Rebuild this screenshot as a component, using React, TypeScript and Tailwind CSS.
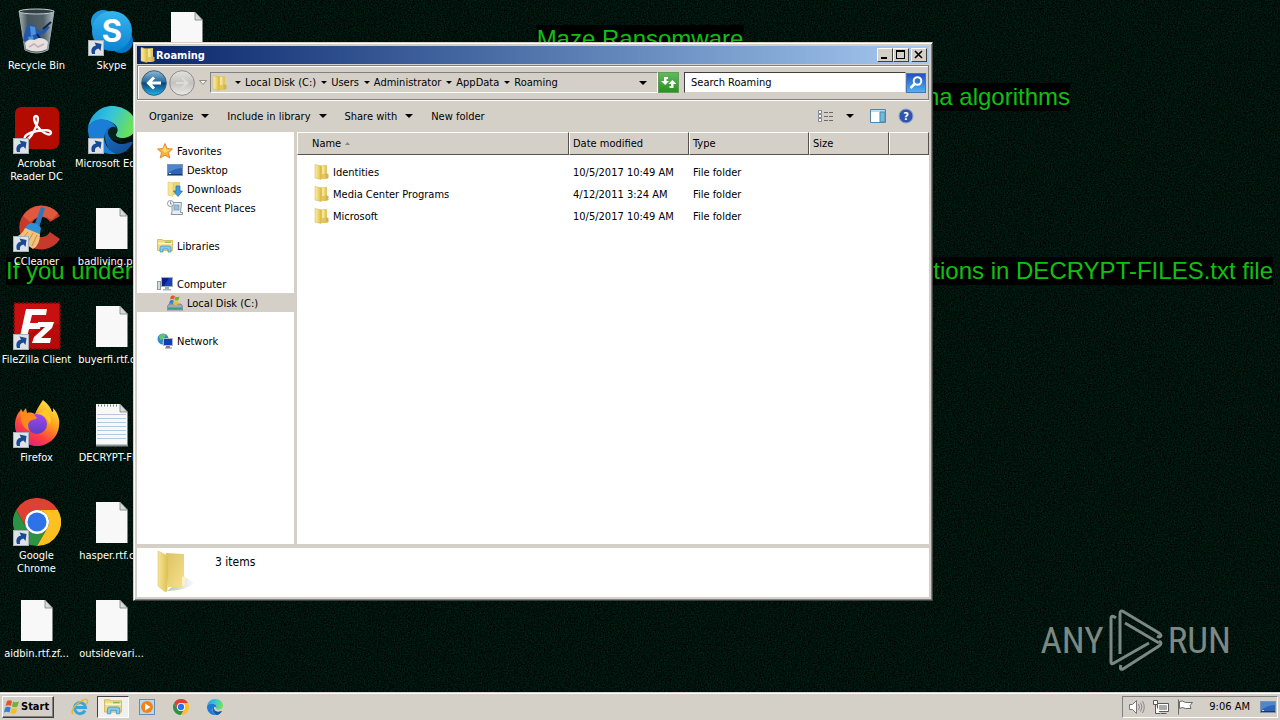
import React, { useState } from 'react';

type IconProps = { className?: string };

const ShortcutArrow: React.FC = () => (
  <svg viewBox="0 0 16 16" className="absolute bottom-0 left-0 size-4" aria-hidden="true">
    <rect x="0.5" y="0.5" width="15" height="15" fill="#dfe3e8" stroke="#aab0b8" />
    <path d="M4 14C2.500 9.500 4 6.500 8 5.500L6.500 2.500L13.500 4L12.500 11L10.500 8.500C7.500 9 6.500 11 7 14Z" fill="#1b4a94" />
  </svg>
);

const RecycleBinIcon: React.FC = () => (
  <svg viewBox="0 0 48 48" className="size-12" aria-hidden="true">
    <defs>
      <linearGradient id="bin" x1="0" x2="1">
        <stop offset="0" stopColor="#a9b6bb" />
        <stop offset="0.25" stopColor="#46555b" />
        <stop offset="0.7" stopColor="#536168" />
        <stop offset="1" stopColor="#b4bfc3" />
      </linearGradient>
    </defs>
    <path d="M6 3L12 42Q24 48 35 42L41 3Z" fill="url(#bin)" stroke="#9aa8ad" />
    <path d="M13 20q3-5 7-3l3 4 5 2 6-5 3 1-5 6-4 2 1 5-6 1-3-3-5 4-5-1 1-6z" fill="#2258a8" />
    <path d="M17 18l5 1 1 7-5 2zM15 29l5-1 1 5-5 1z" fill="#4c92e0" />
    <path d="M30 21l8-7M24 26l4 6" fill="none" stroke="#1c2446" strokeWidth="2" />
    <path d="M12 35q3-5 9-3l5-2q6 0 9 4l-1 7q-10 5-21 0z" fill="#e6dfe0" />
    <path d="M16 39l5-3 4 3 6-3" fill="none" stroke="#c5adb4" strokeWidth="1.500" />
    <ellipse cx="23.500" cy="3.500" rx="17.500" ry="2.500" fill="#323f42" stroke="#c5cfd2" />
  </svg>
);

const SkypeIcon: React.FC = () => (
  <svg viewBox="0 0 48 48" className="size-12" aria-hidden="true">
    <defs>
      <linearGradient id="skype" x2="0" y2="1">
        <stop offset="0" stopColor="#35b5ee" />
        <stop offset="1" stopColor="#0a84d4" />
      </linearGradient>
    </defs>
    <circle cx="15" cy="14" r="12" fill="#1e97dc" />
    <circle cx="33" cy="33" r="12" fill="#0b75c6" />
    <circle cx="24" cy="23" r="20" fill="url(#skype)" />
    <text x="24" y="34" textAnchor="middle" fontSize="31" fontWeight="700" fill="#fff" className="font-['Inter',sans-serif]">S</text>
  </svg>
);

const AcrobatIcon: React.FC = () => (
  <svg viewBox="0 0 48 48" className="size-12" aria-hidden="true">
    <rect x="2" y="1" width="44" height="42" rx="6" fill="#b30b00" />
    <path
      d="M12 33c-2-3 5-7 12-8 8-1.500 14-1 14 2-1 4-10-1-14-7-3-4-4-10-1-10 4 0 1 10-2 15-3 6-7 10-9 8Z"
      fill="none"
      stroke="#fff"
      strokeWidth="2.400"
    />
  </svg>
);

const EdgeIcon: React.FC<IconProps & { hollow?: boolean }> = ({ className, hollow }) => (
  <svg viewBox="0 0 48 48" className={className} aria-hidden="true">
    <defs>
      <linearGradient id="edge-top" x1="0" x2="1" y2="0.300">
        <stop offset="0" stopColor="#1b9bdd" />
        <stop offset="0.5" stopColor="#33c4dc" />
        <stop offset="1" stopColor="#6be05c" />
      </linearGradient>
      <linearGradient id="edge-low" x2="1" y2="1">
        <stop offset="0" stopColor="#1b6fc9" />
        <stop offset="1" stopColor="#114a8b" />
      </linearGradient>
    </defs>
    <path d="M0 22C2 9 12 0 24 0c13 0 24 9 24 19 0 8-6 13-13 13-5 0-9-2-7-4 3-3 2-9-5-12C15 12 4 13 0 22Z" fill="url(#edge-top)" />
    <path d="M0 22C3 13 15 11 23 16c5 3 7 8 5 11-1-4-9-5-11 1-3 9 4 17 12 20C12 50-1 39 0 22Z" fill="#1a7ed6" />
    <path d="M17 28c0-3 2-6 5-7-4 9 3 17 12 17 6 0 9-3 11-2-3 7-9 12-16 12-8-2-13-11-12-20Z" fill="url(#edge-low)" />
    {hollow && <path d="M20 25c1-4 7-6 9-2 1 3-1 4-1 6s4 4 8 4c-9 4-17-1-16-8Z" fill="#06241f" />}
  </svg>
);

const CCleanerIcon: React.FC = () => (
  <svg viewBox="0 0 48 48" className="size-12" aria-hidden="true">
    <path d="M47 12A22 22 0 1 0 47 35L37 28A10 10 0 1 1 37 18Z" fill="#c53a2a" />
    <path d="M45 9A22 22 0 0 0 10 12L17 18Q28 8 39 16Z" fill="#e0593f" />
    <path d="M28 3l4 1-6 20-5-2z" fill="#2c78bd" />
    <path d="M14 21q8-5 14 3l-1 6-15-5z" fill="#2f8fd8" />
    <path d="M12 24l15 6q0 11-7 15L2 33q7-2 10-9Z" fill="#f1c27c" />
    <path d="M15 28L8 36M20 29L14 40M24 31L19 42" stroke="#c98d42" />
  </svg>
);

const FileZillaIcon: React.FC = () => (
  <svg viewBox="0 0 48 48" className="size-12" aria-hidden="true">
    <rect x="1" y="1" width="46" height="46" fill="#b80a0a" stroke="#7c0505" strokeWidth="2" strokeDasharray="2 2" />
    <path d="M2 2H46V22Q22 24 2 42Z" fill="#c91010" />
    <path d="M13 7H34L33 13H19L17 21H28L27 27H16L13 39H6Z" fill="#fff" />
    <path d="M25 20H41L39 26L28 36H38L37 41H19L21 35L32 25H24Z" fill="#fff" />
  </svg>
);

const FirefoxIcon: React.FC = () => (
  <svg viewBox="0 0 48 48" className="size-12" aria-hidden="true">
    <defs>
      <linearGradient id="fox" x1="0.800" y1="0" x2="0.200" y2="1">
        <stop offset="0" stopColor="#fff044" />
        <stop offset="0.4" stopColor="#ff9a1c" />
        <stop offset="0.7" stopColor="#ff3b45" />
        <stop offset="1" stopColor="#d71c87" />
      </linearGradient>
      <linearGradient id="fox-globe" x2="0" y2="1">
        <stop offset="0" stopColor="#a247f0" />
        <stop offset="1" stopColor="#5a3fc0" />
      </linearGradient>
    </defs>
    <path d="M30 0C35 4 38 8 39 12C41 12 40 9 40 8C45 13 47 20 46 26C45 38 35 46 24 46C11 46 2 37 2 25C2 19 4 14 7 11L8 9L10 12L13 8L14 13C17 12 20 13 22 14C24 9 27 4 30 0Z" fill="url(#fox)" />
    <circle cx="24" cy="24" r="10" fill="url(#fox-globe)" />
    <path d="M8 12L14 13C19 13 22 15 24 18C23 20 19 19 17 21C14 24 15 28 17 31C10 29 7 22 8 12Z" fill="#ff8a1b" />
    <path d="M25 14C31 14 36 19 36 25C40 20 37 13 32 10C30 12 27 12 25 14Z" fill="#ffc928" />
  </svg>
);

const ChromeIcon: React.FC<IconProps> = ({ className }) => (
  <svg viewBox="0 0 48 48" className={className} aria-hidden="true">
    <path d="M24 12H44.800A24 24 0 0 0 3.200 12L13.600 30A12 12 0 0 1 24 12Z" fill="#de4032" />
    <path d="M13.600 30L3.200 12A24 24 0 0 0 24 48L34.400 30A12 12 0 0 1 13.600 30Z" fill="#2c9345" />
    <path d="M34.400 30L24 48A24 24 0 0 0 44.800 12H24A12 12 0 0 1 34.400 30Z" fill="#fcc120" />
    <circle cx="24" cy="24" r="12" fill="#fff" />
    <circle cx="24" cy="24" r="9.500" fill="#2d72e8" />
  </svg>
);

const BlankFileIcon: React.FC<{ lined?: boolean }> = ({ lined }) => (
  <svg viewBox="0 0 48 48" className="size-12" aria-hidden="true">
    <path d="M8 4H32L39.500 12V45H8Z" fill="#f8f8f8" />
    <path d="M32 4V12H39.500Z" fill="#d7dbdb" stroke="#78807e" strokeWidth="0.800" />
    {lined && (
      <>
        <path d="M9 14.500H38M9 18.500H38M9 22.500H38M9 26.500H38M9 30.500H38M9 34.500H38M9 38.500H38" stroke="#b6c8dd" />
        <path d="M10 5.500H31" stroke="#777" strokeWidth="2" strokeDasharray="1 2" />
        <path d="M8 45.500H40" stroke="#8b8f92" strokeWidth="2" />
      </>
    )}
  </svg>
);

const FolderIcon: React.FC<IconProps> = ({ className }) => (
  <svg viewBox="0 0 16 16" className={className} aria-hidden="true">
    <defs>
      <linearGradient id="folder-front" x2="1">
        <stop offset="0" stopColor="#fbf1a8" />
        <stop offset="1" stopColor="#dfbe48" />
      </linearGradient>
    </defs>
    <path d="M7 1.500L14 1V12L15.500 14L12 15H7Z" fill="#e3c75e" />
    <path d="M9 2H11.500V10H9Z" fill="#f4e595" />
    <path d="M12.500 9L15.500 10V14L12.500 15Z" fill="#d3b452" />
    <path d="M2 0.500L8 2V15.500L2 14Z" fill="url(#folder-front)" stroke="#cdae48" strokeWidth="0.500" />
  </svg>
);

const LargeFolderIcon: React.FC = () => (
  <svg viewBox="0 0 40 44" className="h-11 w-10" aria-hidden="true">
    <defs>
      <linearGradient id="big-front" x2="1">
        <stop offset="0" stopColor="#f5e59a" />
        <stop offset="1" stopColor="#dfc04e" />
      </linearGradient>
      <linearGradient id="big-back" x2="1" y2="1">
        <stop offset="0" stopColor="#ddc263" />
        <stop offset="1" stopColor="#f5e08c" />
      </linearGradient>
      <linearGradient id="big-shadow" x2="1">
        <stop offset="0" stopColor="#9aa0b0" />
        <stop offset="1" stopColor="#fff" />
      </linearGradient>
    </defs>
    <path d="M10 41L28 27L38 33Q30 40 10 41Z" fill="url(#big-shadow)" opacity="0.700" />
    <path d="M9 3L27 4V37L11 37Z" fill="url(#big-back)" />
    <path d="M25 27L28 26V35L25 37Z" fill="#fbf3c8" />
    <path d="M1 1L11 6V27L10 41Q9 42 7 41L1 36Z" fill="url(#big-front)" stroke="#e0c869" strokeWidth="0.600" />
  </svg>
);

const StarIcon: React.FC = () => (
  <svg viewBox="0 0 16 16" className="size-4" aria-hidden="true">
    <path d="M8 0.500L10.200 5.500L15.500 6L11.500 9.700L12.800 15L8 12.200L3.200 15L4.500 9.700L0.500 6L5.800 5.500Z" fill="#f9b23a" stroke="#dd7a24" strokeWidth="0.800" />
    <path d="M8 3L9.500 6.500L13 7L8 10L5 7Z" fill="#ffd968" />
  </svg>
);

const MonitorIcon: React.FC = () => (
  <svg viewBox="0 0 16 16" className="size-4" aria-hidden="true">
    <rect x="0.500" y="2.500" width="15" height="11" fill="#2f64b4" stroke="#7e93ad" />
    <path d="M1 3H15V6Q8 6 1 11Z" fill="#4f86d0" />
    <path d="M1 12.500H15" stroke="#173764" />
    <path d="M2 11.500H4" stroke="#c8e6ff" />
  </svg>
);

const DownloadsIcon: React.FC = () => (
  <svg viewBox="0 0 16 16" className="size-4" aria-hidden="true">
    <path d="M6 1H13V14H6Z" fill="#ecd577" />
    <path d="M1 1L6 2V15.500L1 14Z" fill="#f6e694" stroke="#d9bd5a" strokeWidth="0.500" />
    <path d="M9 5H13V10H15.500L11 15.500L6.500 10H9Z" fill="#3d9be0" stroke="#1f6cb0" strokeWidth="0.700" />
  </svg>
);

const RecentIcon: React.FC = () => (
  <svg viewBox="0 0 16 16" className="size-4" aria-hidden="true">
    <path d="M5 2.500H14.500L13.500 12.500H15.500V14.500H4L5 12Z" fill="#e7edf1" stroke="#8a979f" />
    <rect x="7" y="5" width="5" height="5" fill="#9cc0da" stroke="#6f94ae" strokeWidth="0.700" />
    <circle cx="3.500" cy="3.500" r="3" fill="#fff" stroke="#88959e" />
    <path d="M3.500 1.500V4H5" fill="none" stroke="#53646f" strokeWidth="0.700" />
  </svg>
);

const LibrariesIcon: React.FC<IconProps> = ({ className }) => (
  <svg viewBox="0 0 16 16" className={className} aria-hidden="true">
    <path d="M0.500 1.500H5L6.500 2.500H15.500V12.500H0.500Z" fill="#f0dc84" stroke="#cda944" strokeWidth="0.700" />
    <path d="M1 5.500H15" stroke="#fff6c8" strokeWidth="1.500" />
    <path d="M8 4.200H14" stroke="#6ab04c" />
    <path d="M3 14V10Q3 8 5 8H12Q14 8 14 10V14H11V11H6V14Z" fill="#85c8ea" stroke="#3e8fc0" strokeWidth="0.700" />
  </svg>
);

const ComputerIcon: React.FC = () => (
  <svg viewBox="0 0 16 16" className="size-4" aria-hidden="true">
    <rect x="0.500" y="5.500" width="3" height="8" fill="#d5dbe2" stroke="#8b97a3" />
    <rect x="4.500" y="1.500" width="11" height="9" fill="#173fc4" stroke="#a7afb9" />
    <path d="M5 2H12L7 10H5Z" fill="#0b1f86" />
    <path d="M8 11H12V13H14V14.500H6V13H8Z" fill="#a8b1bb" />
  </svg>
);

const WindowsFlag: React.FC<IconProps> = ({ className }) => (
  <svg viewBox="0 0 16 16" className={className} aria-hidden="true">
    <path d="M3 2Q5.500 0.500 8 2L7 7Q4.500 5.500 1.500 7Z" fill="#e8542a" />
    <path d="M9 2.500Q11.500 4 15 2.500L13.500 7.500Q11 9 8 7.500Z" fill="#6cb52d" />
    <path d="M1.200 8.500Q4 7 6.700 8.500L5.500 13.500Q3 12 0 13.500Z" fill="#2f7fd6" />
    <path d="M7.800 9Q10.500 10.500 13.200 9L12 14Q9 15.500 6.500 14Z" fill="#f5bd1f" />
  </svg>
);

const DiskIcon: React.FC = () => (
  <svg viewBox="0 0 16 16" className="size-4" aria-hidden="true">
    <path d="M2 9H14L16 12V15H0V12Z" fill="#9bacb5" stroke="#5b6d77" strokeWidth="0.600" />
    <path d="M1 12.500H15V14.500H1Z" fill="#3d9a86" />
    <path d="M4 1Q6 0 8 1L7 4.500Q5 3.500 3 4.500Z" fill="#e8542a" />
    <path d="M8.500 1.500Q10 2.500 12.500 1.500L11.500 5Q9.500 6 7.500 5Z" fill="#6cb52d" />
    <path d="M3 5.500Q5 4.500 6.800 5.500L6 9Q4 8 2 9Z" fill="#2f7fd6" />
    <path d="M7.500 6Q9.500 7 11.500 6L10.500 9.500Q8.500 10.500 6.500 9.500Z" fill="#f5bd1f" />
  </svg>
);

const NetworkIcon: React.FC = () => (
  <svg viewBox="0 0 16 16" className="size-4" aria-hidden="true">
    <circle cx="6" cy="6" r="5.500" fill="#2c8bd2" />
    <path d="M2 3Q6-1 9 2L6 6L3 7ZM5 9L8 8V11L6 11Z" fill="#69c36b" />
    <rect x="6.500" y="5.500" width="9" height="7" fill="#1739b8" stroke="#b2bac4" />
    <path d="M9 13H13V14.500H15V15.500H8V14.500H9Z" fill="#7a8591" />
  </svg>
);

const Caret: React.FC<IconProps> = ({ className = 'h-1 w-2' }) => (
  <svg viewBox="0 0 8 4" className={className} aria-hidden="true">
    <path d="M0 0H8L4 4Z" fill="#000" />
  </svg>
);

const NavCircle: React.FC<{ label: string; forward?: boolean }> = ({ label, forward }) => (
  <button type="button" aria-label={label} className="size-7 shrink-0">
    <svg viewBox="0 0 28 28" className="size-7" aria-hidden="true">
      <defs>
        <linearGradient id="nav-back" x2="0" y2="1">
          <stop offset="0" stopColor="#8fb9d3" />
          <stop offset="0.45" stopColor="#2a6a9c" />
          <stop offset="0.5" stopColor="#0b4379" />
          <stop offset="1" stopColor="#21b5ea" />
        </linearGradient>
        <linearGradient id="nav-forward" x2="0" y2="1">
          <stop offset="0" stopColor="#e3e3e1" />
          <stop offset="0.5" stopColor="#c3c2be" />
          <stop offset="1" stopColor="#ecebe8" />
        </linearGradient>
      </defs>
      <circle cx="14" cy="14" r="12.300" fill={forward ? 'url(#nav-forward)' : 'url(#nav-back)'} stroke={forward ? '#8d8d8b' : '#3b5f79'} />
      <path
        d={forward ? 'M8 14H19M14 9L19.500 14L14 19' : 'M21 14H9M14 8.500L8.500 14L14 19.500'}
        fill="none"
        stroke={forward ? '#dddcd9' : '#fff'}
        strokeWidth={forward ? 2 : 3}
      />
    </svg>
  </button>
);

type DesktopItem = { label: string; icon: React.ReactNode; shortcut?: boolean; wrap?: boolean };

const desktopItems: DesktopItem[] = [
  { label: 'Recycle Bin', icon: <RecycleBinIcon /> },
  { label: 'Acrobat Reader DC', icon: <AcrobatIcon />, shortcut: true, wrap: true },
  { label: 'CCleaner', icon: <CCleanerIcon />, shortcut: true },
  { label: 'FileZilla Client', icon: <FileZillaIcon />, shortcut: true },
  { label: 'Firefox', icon: <FirefoxIcon />, shortcut: true },
  { label: 'Google Chrome', icon: <ChromeIcon className="size-12" />, shortcut: true, wrap: true },
  { label: 'aidbin.rtf.zf...', icon: <BlankFileIcon /> },
  { label: 'Skype', icon: <SkypeIcon />, shortcut: true },
  { label: 'Microsoft Edge', icon: <EdgeIcon className="size-12" hollow />, shortcut: true },
  { label: 'badliving.png', icon: <BlankFileIcon /> },
  { label: 'buyerfi.rtf.c...', icon: <BlankFileIcon /> },
  { label: 'DECRYPT-FI...', icon: <BlankFileIcon lined /> },
  { label: 'hasper.rtf.c...', icon: <BlankFileIcon /> },
  { label: 'outsidevari...', icon: <BlankFileIcon /> },
  { label: '', icon: <BlankFileIcon /> },
];

type NavItem = { label: string; icon: React.ReactNode; child?: boolean };

const navGroups: NavItem[][] = [
  [
    { label: 'Favorites', icon: <StarIcon /> },
    { label: 'Desktop', icon: <MonitorIcon />, child: true },
    { label: 'Downloads', icon: <DownloadsIcon />, child: true },
    { label: 'Recent Places', icon: <RecentIcon />, child: true },
  ],
  [{ label: 'Libraries', icon: <LibrariesIcon className="size-4" /> }],
  [
    { label: 'Computer', icon: <ComputerIcon /> },
    { label: 'Local Disk (C:)', icon: <DiskIcon />, child: true },
  ],
  [{ label: 'Network', icon: <NetworkIcon /> }],
];

const crumbs = ['Local Disk (C:)', 'Users', 'Administrator', 'AppData', 'Roaming'];

const files = [
  { name: 'Identities', modified: '10/5/2017 10:49 AM' },
  { name: 'Media Center Programs', modified: '4/12/2011 3:24 AM' },
  { name: 'Microsoft', modified: '10/5/2017 10:49 AM' },
];

const raised = 'border border-t-white border-l-white border-r-[#404040] border-b-[#404040] bg-[#d4d0c8]';
const headCell = 'border-t border-l border-t-white border-l-white border-r border-b border-r-[#55524e] border-b-[#55524e] p-0 text-left font-normal';

const Wallpaper: React.FC = () => (
  <div className="absolute inset-0 overflow-hidden text-2xl leading-7 text-[#10c010] font-['Liberation_Sans',Arial,sans-serif]">
    <svg className="absolute inset-0 size-full" aria-hidden="true">
      <filter id="grain" colorInterpolationFilters="sRGB">
        <feTurbulence type="fractalNoise" baseFrequency="0.700" numOctaves="2" seed="4" />
        <feColorMatrix values="0 0 0 0 0.002  0.240 0 0 0 -0.047  0.150 0 0 0 -0.028  0 0 0 0 1" />
      </filter>
      <rect width="100%" height="100%" filter="url(#grain)" />
    </svg>
    <p className="absolute top-[25px] left-1/2 -translate-x-1/2 bg-black whitespace-nowrap">Maze Ransomware</p>
    <p className="absolute top-[83px] right-[210px] bg-black whitespace-nowrap">na algorithms</p>
    <p className="absolute top-[257px] left-[6px] bg-black whitespace-nowrap">If you unders</p>
    <p className="absolute top-[257px] right-[7px] bg-black whitespace-nowrap">ctions in DECRYPT-FILES.txt file</p>
  </div>
);

const Watermark: React.FC = () => (
  <div className="absolute right-[49px] bottom-5 flex items-center gap-1 text-[37px] leading-none text-[#7b8883] font-['Roboto_Condensed',Roboto,sans-serif]">
    <span>ANY</span>
    <svg viewBox="0 0 56 64" className="h-16 w-14" fill="none" stroke="currentColor" strokeWidth="3" strokeLinejoin="round" aria-hidden="true">
      <path d="M12 46V6Q12 1 16 4L51 25Q55 28 51 29L49 28" />
      <path d="M8 10Q3 6 3 11V54Q3 57 6 55L41 35" />
      <path d="M17 15L51 35" />
      <path d="M13 57Q11 62 15 61L51 38Q55 35 51 33" />
    </svg>
    <span>RUN</span>
  </div>
);

const DesktopIcons: React.FC = () => (
  <ul className="absolute top-0 -left-px grid grid-flow-col grid-rows-[repeat(7,98px)] auto-cols-[75px] text-center text-[11px] leading-[13px] text-white">
    {desktopItems.map(({ label, icon, shortcut, wrap }, i) => (
      <li key={i} className="flex flex-col items-center gap-[3px] pt-2">
        <div className="relative size-12">
          {icon}
          {shortcut && <ShortcutArrow />}
        </div>
        <span className={wrap ? 'w-16' : 'whitespace-nowrap'}>{label}</span>
      </li>
    ))}
  </ul>
);

const TitleBar: React.FC = () => (
  <header className="flex h-[18px] items-center gap-px bg-linear-to-r from-[#0a246a] to-[#a6caf0] px-0.5">
    <FolderIcon className="size-4" />
    <h1 className="flex-1 text-[11px] leading-none font-bold text-white">Roaming</h1>
    <div className="flex text-black">
      <button type="button" aria-label="Minimize" className={`h-3.5 w-4 ${raised}`}>
        <svg viewBox="0 0 14 12" aria-hidden="true"><path d="M3 8H9V10H3Z" /></svg>
      </button>
      <button type="button" aria-label="Maximize" className={`h-3.5 w-4 ${raised}`}>
        <svg viewBox="0 0 14 12" aria-hidden="true"><path d="M2 1H11V10H2ZM3 3V9H10V3Z" fillRule="evenodd" /></svg>
      </button>
      <button type="button" aria-label="Close" className={`ml-0.5 h-3.5 w-4 ${raised}`}>
        <svg viewBox="0 0 14 12" aria-hidden="true"><path d="M3 2L10 9M10 2L3 9" stroke="#000" strokeWidth="1.600" /></svg>
      </button>
    </div>
  </header>
);

const AddressBar: React.FC<{ query: string; onQuery: (value: string) => void }> = ({ query, onQuery }) => (
  <div className="mt-px flex h-[35px] items-center border border-[#808080] pl-0.5 shadow-[inset_1px_1px_0_#fff,0_1px_0_#fff]">
    <NavCircle label="Back" />
    <NavCircle label="Forward" forward />
    <button type="button" aria-label="Recent pages" className="flex w-3.5 justify-center">
      <svg viewBox="0 0 8 5" className="h-[5px] w-2" aria-hidden="true"><path d="M0.500 0.500H7.500L4 4.500Z" fill="#f4f2ee" stroke="#77736d" strokeWidth="0.800" /></svg>
    </button>
    <nav aria-label="Address" className="flex h-[21px] flex-1 items-center border border-t-[#808080] border-l-[#808080] border-r-white border-b-white">
      <FolderIcon className="mr-1 size-4" />
      {crumbs.map((crumb) => (
        <span key={crumb} className="flex items-center">
          <Caret className="mx-1 h-[3px] w-[6px]" />
          <a href="#" className="mr-px whitespace-nowrap">{crumb}</a>
        </span>
      ))}
      <button type="button" aria-label="Previous locations" className="mr-1.5 ml-auto p-1"><Caret /></button>
    </nav>
    <button type="button" aria-label="Refresh" className="mr-[5px] size-[21px] border border-[#5f9c55] bg-linear-to-b from-[#62b85e] to-[#2a8f22]">
      <svg viewBox="0 0 19 19" fill="#fff" aria-hidden="true">
        <path d="M5 4H9V6H7.500V8H10L6.200 12L2 8H5Z" />
        <path d="M14.500 15H10.500V13H12V11H9.500L13.300 7L17.500 11H14.500Z" />
      </svg>
    </button>
    <input
      type="text"
      aria-label="Search Roaming"
      placeholder="Search Roaming"
      value={query}
      onChange={(e) => onQuery(e.target.value)}
      className="h-[21px] w-[222px] border border-t-[#404040] border-l-[#404040] border-r-[#d4d0c8] border-b-[#d4d0c8] bg-white px-[6px] placeholder:text-black focus:outline-none"
    />
    <button type="button" aria-label="Search" className="mr-0.5 size-5 border border-[#4c74b8] bg-linear-to-b from-[#2450c4] to-[#4fb2ee]">
      <svg viewBox="0 0 18 18" fill="none" stroke="#fff" strokeWidth="2" aria-hidden="true">
        <circle cx="10.500" cy="7" r="3.800" />
        <path d="M7.500 10L3.500 14" strokeWidth="2.500" />
      </svg>
    </button>
  </div>
);

const CommandBar: React.FC = () => (
  <div className="flex h-8 items-center px-3">
    <div className="flex flex-1 items-center gap-[18px]">
      {['Organize', 'Include in library', 'Share with'].map((command) => (
        <button key={command} type="button" className="flex items-center gap-2 whitespace-nowrap">
          {command} <Caret />
        </button>
      ))}
      <button type="button" className="whitespace-nowrap">New folder</button>
    </div>
    <button type="button" aria-label="Change your view" className="flex items-center gap-3">
      <svg viewBox="0 0 16 16" className="size-4" aria-hidden="true">
        <path d="M0.500 2.500H3.500V5.500H0.500ZM0.500 6.500H3.500V9.500H0.500ZM0.500 10.500H3.500V13.500H0.500Z" fill="#fff" stroke="#7f8797" />
        <path d="M6 4.500H10M11 4.500H15M6 8.500H10M11 8.500H15M6 12.500H10M11 12.500H15" stroke="#6c6a68" />
      </svg>
      <Caret />
    </button>
    <button type="button" aria-label="Show the preview pane" className="ml-4">
      <svg viewBox="0 0 16 16" className="size-4" aria-hidden="true">
        <path d="M0.500 1.500H15.500V14.500H0.500Z" fill="#fff" stroke="#4e87ab" />
        <path d="M1 2H15V4H1Z" fill="#b5dcef" />
        <path d="M10 4H15V14H10Z" fill="#6ebbdf" stroke="#4e87ab" />
      </svg>
    </button>
    <button type="button" aria-label="Get help" className="mr-[3px] ml-3">
      <svg viewBox="0 0 16 16" className="size-4" aria-hidden="true">
        <circle cx="8" cy="8" r="7" fill="#2f54ae" stroke="#8fa0c8" />
        <text x="8" y="12" textAnchor="middle" fontSize="11" fontWeight="700" fill="#fff">?</text>
      </svg>
    </button>
  </div>
);

const NavigationPane: React.FC<{ selected: string; onSelect: (label: string) => void }> = ({ selected, onSelect }) => (
  <nav aria-label="Folders" className="flex w-[157px] shrink-0 flex-col gap-[19px] bg-white pt-[9px]">
    {navGroups.map((group) => (
      <ul key={group[0].label}>
        {group.map(({ label, icon, child }) => (
          <li key={label}>
            <button
              type="button"
              onClick={() => onSelect(label)}
              className={`flex h-[19px] w-full items-center gap-1 ${child ? 'pl-[30px]' : 'pl-5'} ${selected === label ? 'bg-[#d4d0c8]' : ''}`}
            >
              {icon}
              <span className="pt-0.5">{label}</span>
            </button>
          </li>
        ))}
      </ul>
    ))}
  </nav>
);

const FileList: React.FC = () => (
  <main className="flex-1 overflow-hidden bg-white">
    <table className="w-full table-fixed border-separate border-spacing-0">
      <colgroup>
        <col className="w-[272px]" />
        <col className="w-[120px]" />
        <col className="w-[120px]" />
        <col className="w-20" />
        <col />
      </colgroup>
      <thead className="bg-[#d4d0c8]">
        <tr className="h-[23px]">
          <th className={headCell}>
            <span className="flex items-center gap-1 pl-3.5">
              Name
              <svg viewBox="0 0 7 4" className="h-[3px] w-[5px]" aria-hidden="true"><path d="M0 4L3.500 0L7 4Z" fill="#8a867e" /></svg>
            </span>
          </th>
          <th className={headCell}><span className="pl-[3px]">Date modified</span></th>
          <th className={headCell}><span className="pl-[3px]">Type</span></th>
          <th className={headCell}><span className="pl-[3px]">Size</span></th>
          <th className={headCell} aria-label="More columns" />
        </tr>
      </thead>
      <tbody className="before:block before:h-1.5">
        {files.map(({ name, modified }) => (
          <tr key={name} className="h-[22px]">
            <td className="p-0">
              <span className="flex items-center gap-1 pl-4">
                <FolderIcon className="size-4" />
                {name}
              </span>
            </td>
            <td className="p-0 pl-1 whitespace-nowrap">{modified}</td>
            <td className="p-0 pl-1">File folder</td>
            <td className="p-0" />
            <td className="p-0" />
          </tr>
        ))}
      </tbody>
    </table>
  </main>
);

const ExplorerWindow: React.FC = () => {
  const [query, setQuery] = useState<string>('');
  const [selected, setSelected] = useState<string>('Local Disk (C:)');

  return (
    <section className="absolute top-[42px] right-[347px] bottom-[91px] left-[133px] flex flex-col border border-t-[#d4d0c8] border-l-[#d4d0c8] border-r-[#404040] border-b-[#404040] bg-[#d4d0c8] p-0.5 text-[11px] leading-[13px] text-black shadow-[inset_1px_1px_0_#fff,inset_-1px_-1px_0_#808080]">
      <div className="flex flex-1 flex-col p-px">
        <TitleBar />
        <AddressBar query={query} onQuery={setQuery} />
        <CommandBar />
        <div className="flex flex-1 gap-[3px]">
          <NavigationPane selected={selected} onSelect={setSelected} />
          <FileList />
        </div>
        <footer className="mt-1 flex h-[49px] items-start bg-white pt-0.5 pl-5">
          <LargeFolderIcon />
          <p className="pt-1 pl-[18px] text-xs">3 items</p>
        </footer>
      </div>
    </section>
  );
};

const Taskbar: React.FC = () => (
  <footer className="relative flex h-7 shrink-0 items-center border-t border-[#d4d0c8] bg-[#d4d0c8] px-0.5 pt-[3px] pb-0.5 text-[11px] text-black shadow-[inset_0_1px_0_#fff]">
    <button type="button" className={`flex h-[22px] w-[52px] items-center gap-px pl-px font-bold shadow-[inset_-1px_-1px_0_#808080] ${raised}`}>
      <WindowsFlag className="size-4" />
      Start
    </button>
    <div className="ml-2.5 flex items-center gap-0.5">
      <button type="button" aria-label="Internet Explorer" className="flex w-[31px] justify-center">
        <svg viewBox="0 0 18 18" className="size-[18px]" fill="none" aria-hidden="true">
          <path d="M14 12.500A5.500 5.500 0 1 1 14.500 9.500H5" stroke="#3aa5dc" strokeWidth="3" />
          <path d="M2 16Q-1 13 6 6Q15-1 16.500 2.500Q17 4 15 6.500" stroke="#e5b82e" strokeWidth="1.500" />
        </svg>
      </button>
      <button type="button" aria-label="Windows Explorer" className="flex h-[22px] w-8 items-center justify-center border border-t-[#404040] border-l-[#404040] border-r-white border-b-white bg-[#f2f0ec]">
        <LibrariesIcon className="size-[18px]" />
      </button>
      <button type="button" aria-label="Windows Media Player" className="flex w-8 justify-center">
        <svg viewBox="0 0 16 16" className="size-4" aria-hidden="true">
          <rect x="0.500" y="0.500" width="15" height="15" fill="#b8d8f0" stroke="#5d8fb8" />
          <circle cx="8" cy="8" r="6" fill="#f0841c" />
          <path d="M6 4.500L11.500 8L6 11.500Z" fill="#fff" />
        </svg>
      </button>
      <button type="button" aria-label="Google Chrome" className="flex w-8 justify-center"><ChromeIcon className="size-4" /></button>
      <button type="button" aria-label="Microsoft Edge" className="flex w-8 justify-center"><EdgeIcon className="size-4" /></button>
    </div>
    <div className="ml-auto flex h-[22px] items-center gap-2 border border-t-[#808080] border-l-[#808080] border-r-white border-b-white pr-px pl-1.5">
      <svg viewBox="0 0 16 16" className="size-4" fill="#fff" stroke="#77757a" aria-hidden="true">
        <path d="M0.500 5.500H3.500L7.500 1.500V14.500L3.500 10.500H0.500Z" />
        <path d="M9.500 5Q11.500 8 9.500 11M11.500 3.500Q14.500 8 11.500 12.500M13.500 2Q17 8 13.500 14" fill="none" strokeWidth="0.800" />
      </svg>
      <svg viewBox="0 0 16 16" className="size-4" fill="#fff" stroke="#5a5a5c" aria-hidden="true">
        <path d="M4.500 4.500H15.500V12.500H4.500ZM7.500 14.500H13.500" />
        <path d="M6.500 6.500H13.500V10.500H6.500Z" fill="#a8aaac" stroke="#a8aaac" />
        <path d="M0.500 1.500H4.500V5.500H0.500ZM2.500 5.500V14.500H7" />
      </svg>
      <svg viewBox="0 0 16 16" className="size-4" fill="#fff" stroke="#6b6a6c" aria-hidden="true">
        <path d="M1.500 0.500V15.500" />
        <path d="M2.500 2.500Q5 1 8.500 3.500H15.500L13 6.500L14 9.500H8.500Q5 7.500 2.500 9.500Z" />
      </svg>
      <time className="pr-0.5 pl-2">9:06 AM</time>
      <button type="button" aria-label="Show desktop"><MonitorIcon /></button>
    </div>
  </footer>
);

const App: React.FC = () => (
  <div className="flex h-screen flex-col overflow-hidden bg-[#00110a] font-['DejaVu_Sans_Condensed','DejaVu_Sans',Tahoma,sans-serif]">
    <div className="relative flex-1">
      <Wallpaper />
      <Watermark />
      <DesktopIcons />
      <ExplorerWindow />
    </div>
    <Taskbar />
  </div>
);

export default App;
